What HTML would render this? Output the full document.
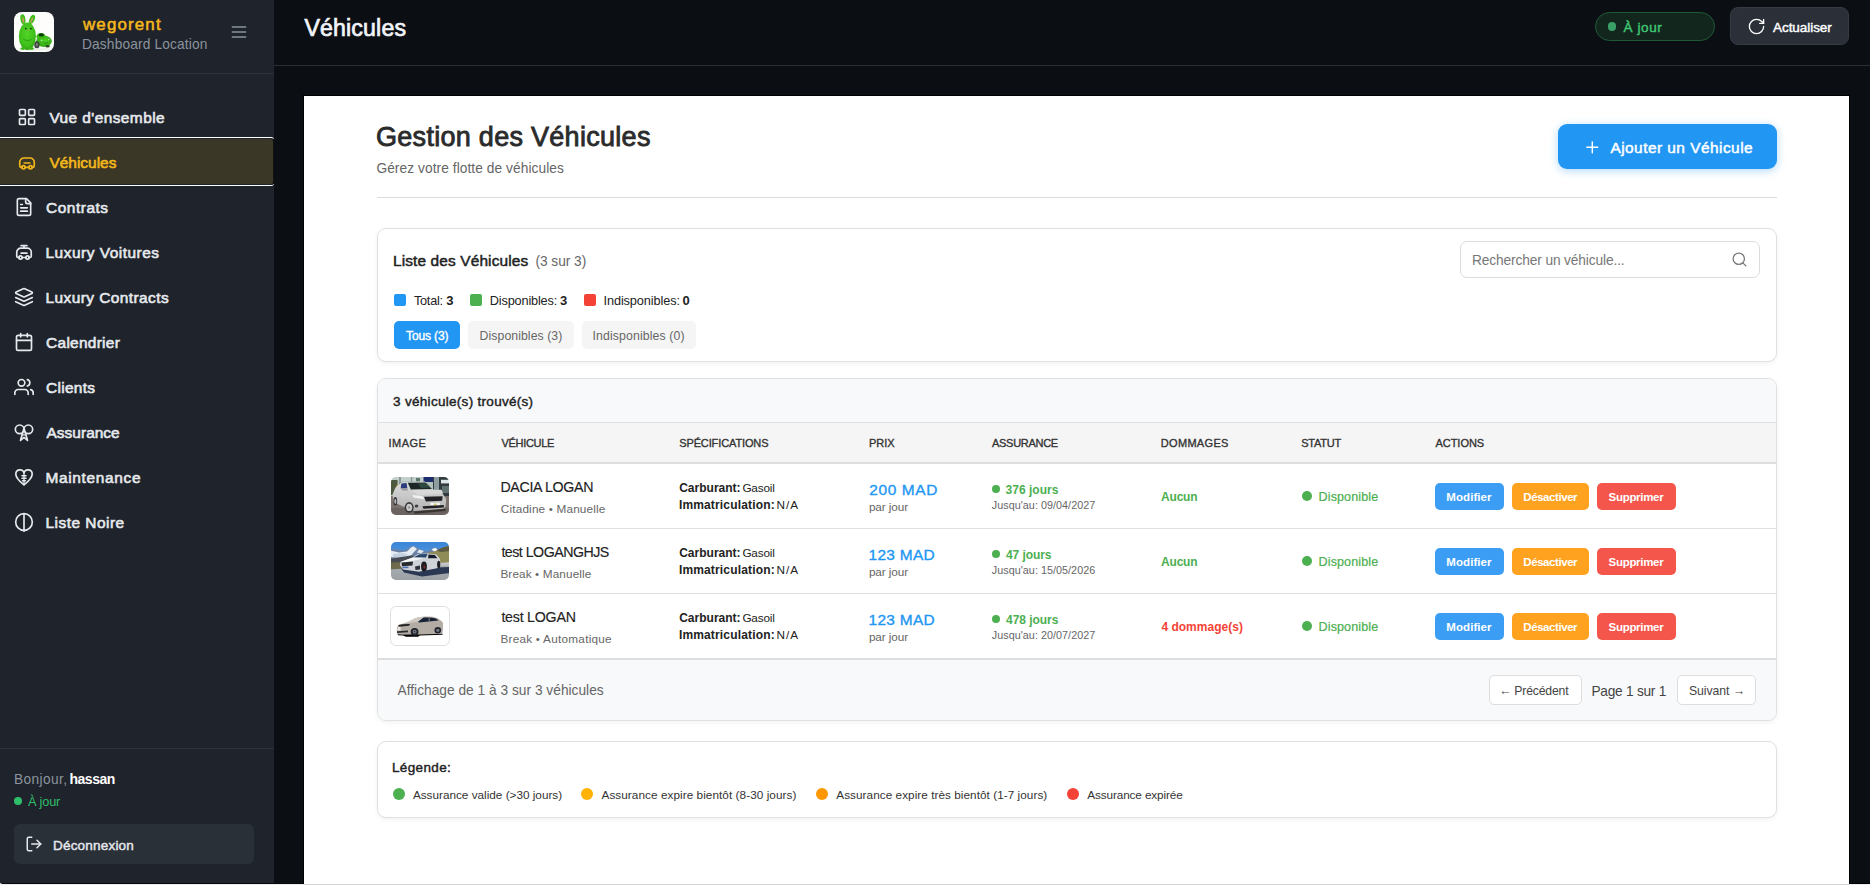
<!DOCTYPE html>
<html lang="fr">
<head>
<meta charset="utf-8">
<title>Véhicules</title>
<style>
*{box-sizing:border-box;margin:0;padding:0}
html,body{width:1870px;height:885px;overflow:hidden;background:#0b0e12;font-family:"Liberation Sans",sans-serif}
body{position:relative}
.b{position:absolute}
.t{position:absolute;white-space:nowrap;line-height:1}
svg{position:absolute;overflow:visible}
.ic{fill:none;stroke:#e6e9ed;stroke-width:2;stroke-linecap:round;stroke-linejoin:round}
.card{position:absolute;border:1px solid #e0e0e0;border-radius:9px;background:#fff;box-shadow:0 2px 5px rgba(0,0,0,.05)}
.btn{position:absolute;border-radius:5px;height:27px}
.dot{position:absolute;border-radius:50%}

</style>
</head>
<body>
<div class="b" style="left:0px;top:0px;width:274px;height:885px;background:#1f232b"></div>
<div class="b" style="left:0px;top:73px;width:274px;height:1px;background:#2d323b"></div>
<div class="b" style="left:0px;top:748px;width:274px;height:1px;background:#2d323b"></div>
<div class="b" style="left:-8px;top:137px;width:282px;height:49px;border-top:1px solid #fff;border-bottom:1px solid #fff;border-radius:3px"></div>
<div class="b" style="left:0px;top:139px;width:273px;height:45px;background:#3a3726;border-radius:0 3px 3px 0"></div>
<div class="b" style="left:273px;top:139px;width:1px;height:45px;background:#12130f"></div>
<div class="b" style="left:14px;top:824px;width:240px;height:40px;background:#2a3038;border-radius:6px"></div>
<div class="dot" style="left:14.0px;top:797.2px;width:8px;height:8px;background:#2fbf6a"></div>
<div class="b" style="left:274px;top:65px;width:1596px;height:1px;background:#2a2f38"></div>
<div class="b" style="left:1595px;top:12px;width:120px;height:29px;background:#13261e;border:1px solid #1f5a37;border-radius:15px"></div>
<div class="dot" style="left:1607.8px;top:22.2px;width:8.4px;height:8.4px;background:#3a9f66"></div>
<div class="b" style="left:1730px;top:7px;width:119px;height:38px;background:#2a2f38;border:1px solid #353b45;border-radius:8px"></div>
<div class="b" style="left:303px;top:95px;width:1547px;height:800px;background:#fff;border:1px solid #000"></div>
<div class="b" style="left:377px;top:197px;width:1400px;height:1px;background:#dcdcdc"></div>
<div class="b" style="left:1558px;top:124px;width:219px;height:45px;background:#2196f3;border-radius:9px;box-shadow:0 2px 8px rgba(33,150,243,.35)"></div>
<div class="card" style="left:377px;top:228px;width:1400px;height:134px"></div>
<div class="b" style="left:1460px;top:241px;width:300px;height:37px;border:1px solid #dcdcdc;border-radius:7px;background:#fff"></div>
<div class="b" style="left:394px;top:294px;width:12px;height:12px;background:#2196f3;border-radius:2px"></div>
<div class="b" style="left:470px;top:294px;width:12px;height:12px;background:#4caf50;border-radius:2px"></div>
<div class="b" style="left:584px;top:294px;width:12px;height:12px;background:#f44336;border-radius:2px"></div>
<div class="b" style="left:394px;top:321px;width:66px;height:28px;background:#2196f3;border-radius:5px"></div>
<div class="b" style="left:468px;top:321px;width:106px;height:28px;background:#f5f5f5;border-radius:5px"></div>
<div class="b" style="left:582px;top:321px;width:114px;height:28px;background:#f5f5f5;border-radius:5px"></div>
<div class="card" style="left:377px;top:378px;width:1400px;height:343px;overflow:hidden;background:#fff"><div class="b" style="left:0;top:0;width:1400px;height:44px;background:#f8f9fa;border-bottom:1px solid #e0e0e0"></div><div class="b" style="left:0;top:44px;width:1400px;height:41px;background:#f5f5f5;border-bottom:2px solid #dedede"></div><div class="b" style="left:0;top:149px;width:1400px;height:1px;background:#e0e0e0"></div><div class="b" style="left:0;top:214px;width:1400px;height:1px;background:#e0e0e0"></div><div class="b" style="left:0;top:279px;width:1400px;height:2px;background:#dedede"></div><div class="b" style="left:0;top:281px;width:1400px;height:62px;background:#f8f9fa"></div></div>
<div class="dot" style="left:992.0px;top:485.0px;width:8px;height:8px;background:#4caf50"></div>
<div class="dot" style="left:1302.0px;top:491.0px;width:10px;height:10px;background:#4caf50"></div>
<div class="b" style="left:1435px;top:483px;width:69px;height:27px;background:#3b9df4;border-radius:5px"></div>
<div class="b" style="left:1512px;top:483px;width:77px;height:27px;background:#ffa21f;border-radius:5px"></div>
<div class="b" style="left:1597px;top:483px;width:79px;height:27px;background:#f4564b;border-radius:5px"></div>
<div class="dot" style="left:992.0px;top:550.0px;width:8px;height:8px;background:#4caf50"></div>
<div class="dot" style="left:1302.0px;top:556.0px;width:10px;height:10px;background:#4caf50"></div>
<div class="b" style="left:1435px;top:548px;width:69px;height:27px;background:#3b9df4;border-radius:5px"></div>
<div class="b" style="left:1512px;top:548px;width:77px;height:27px;background:#ffa21f;border-radius:5px"></div>
<div class="b" style="left:1597px;top:548px;width:79px;height:27px;background:#f4564b;border-radius:5px"></div>
<div class="dot" style="left:992.0px;top:615.0px;width:8px;height:8px;background:#4caf50"></div>
<div class="dot" style="left:1302.0px;top:621.0px;width:10px;height:10px;background:#4caf50"></div>
<div class="b" style="left:1435px;top:613px;width:69px;height:27px;background:#3b9df4;border-radius:5px"></div>
<div class="b" style="left:1512px;top:613px;width:77px;height:27px;background:#ffa21f;border-radius:5px"></div>
<div class="b" style="left:1597px;top:613px;width:79px;height:27px;background:#f4564b;border-radius:5px"></div>
<div class="b" style="left:1489px;top:675px;width:93px;height:30px;background:#fff;border:1px solid #ddd;border-radius:5px"></div>
<div class="b" style="left:1677px;top:675px;width:79px;height:30px;background:#fff;border:1px solid #ddd;border-radius:5px"></div>
<div class="card" style="left:377px;top:741px;width:1400px;height:77px"></div>
<div class="dot" style="left:393.0px;top:788.0px;width:12px;height:12px;background:#4caf50"></div>
<div class="dot" style="left:581.0px;top:788.0px;width:12px;height:12px;background:#ffb300"></div>
<div class="dot" style="left:816.0px;top:788.0px;width:12px;height:12px;background:#ff9800"></div>
<div class="dot" style="left:1067.0px;top:788.0px;width:12px;height:12px;background:#f44336"></div>
<div class="b" style="left:0px;top:883px;width:303px;height:1px;background:#08090b"></div>
<div class="b" style="left:1850px;top:883px;width:20px;height:1px;background:#000"></div>
<div class="b" style="left:0px;top:884px;width:1870px;height:1px;background:#ededed"></div>
<div class="b" style="left:304px;top:884px;width:1545px;height:1px;background:#d4d4d4"></div>
<div class="b" style="left:0px;top:883px;width:2px;height:2px;background:#ededed;border-radius:0 2px 0 0"></div>
<svg class="ic" style="left:229px;top:22px;stroke:#8b949e;stroke-width:1.8" width="20" height="20" viewBox="0 0 24 24"><path d="M4 6h16M4 12h16M4 18h16"/></svg>
<svg class="ic" style="left:17px;top:107px;" width="20" height="20" viewBox="0 0 24 24"><rect x="3" y="3" width="7" height="7" rx="1"/><rect x="14" y="3" width="7" height="7" rx="1"/><rect x="14" y="14" width="7" height="7" rx="1"/><rect x="3" y="14" width="7" height="7" rx="1"/></svg>
<svg class="ic" style="left:17px;top:152.5px;stroke:#f5b81c;" width="20" height="20" viewBox="0 0 24 24"><path d="M6.200 17.200H4.800a1.500 1.500 0 0 1-1.500-1.500V11a5 5 0 0 1 5-5h7.400a5 5 0 0 1 5 5v4.700a1.500 1.500 0 0 1-1.500 1.500h-1.400"/><circle cx="7.800" cy="17.200" r="2"/><circle cx="16.200" cy="17.200" r="2"/><path d="M9.800 17.200h4.400M8.500 12h7"/></svg>
<svg class="ic" style="left:14px;top:197px;" width="20" height="20" viewBox="0 0 24 24"><path d="M15 2H6a2 2 0 0 0-2 2v16a2 2 0 0 0 2 2h12a2 2 0 0 0 2-2V7Z"/><path d="M14 2v4a2 2 0 0 0 2 2h4"/><path d="M10 9H8M16 13H8M16 17H8"/></svg>
<svg class="ic" style="left:14px;top:241.5px;" width="20" height="20" viewBox="0 0 24 24"><path d="M6.200 18.600H4.800a1.500 1.500 0 0 1-1.500-1.500V12.400a5 5 0 0 1 5-5h7.400a5 5 0 0 1 5 5v4.700a1.500 1.500 0 0 1-1.500 1.500h-1.400"/><circle cx="7.800" cy="18.600" r="2"/><circle cx="16.200" cy="18.600" r="2"/><path d="M9.800 18.600h4.400M8.500 13.400h7M8.500 4.400h7M12 4.400v3"/></svg>
<svg class="ic" style="left:14px;top:287px;" width="20" height="20" viewBox="0 0 24 24"><path d="m12.830 2.180a2 2 0 0 0-1.660 0L2.600 6.080a1 1 0 0 0 0 1.830l8.580 3.910a2 2 0 0 0 1.660 0l8.580-3.900a1 1 0 0 0 0-1.830Z"/><path d="m22 17.650-9.170 4.160a2 2 0 0 1-1.660 0L2 17.650"/><path d="m22 12.650-9.170 4.160a2 2 0 0 1-1.660 0L2 12.650"/></svg>
<svg class="ic" style="left:14px;top:332px;" width="20" height="20" viewBox="0 0 24 24"><path d="M8 2v4M16 2v4"/><rect x="3" y="4" width="18" height="18" rx="2"/><path d="M3 10h18"/></svg>
<svg class="ic" style="left:14px;top:377px;" width="20" height="20" viewBox="0 0 24 24"><path d="M17 21v-2a4 4 0 0 0-4-4H5a4 4 0 0 0-4 4v2"/><circle cx="9" cy="7" r="4"/><path d="M23 21v-2a4 4 0 0 0-3-3.870"/><path d="M16 3.130a4 4 0 0 1 0 7.750"/></svg>
<svg class="ic" style="left:14px;top:422px;" width="20" height="20" viewBox="0 0 24 24"><circle cx="6.800" cy="8.800" r="5.200"/><circle cx="17.200" cy="8.800" r="5.200"/><path d="M12 7.500 7.800 22l4.200-3.600 4.200 3.600Z"/><path d="M9.800 15.500h4.400" style="stroke-width:1.500"/></svg>
<svg class="ic" style="left:14px;top:467px;" width="20" height="20" viewBox="0 0 24 24"><path d="M12 21.500C6.500 17 2.200 13.200 2.200 8.600a5 5 0 0 1 9.800-1.600 5 5 0 0 1 9.800 1.600c0 4.600-4.300 8.400-9.800 12.900Z"/><path d="M12 7v14M9.500 10.500h5M9.500 13.500h5M10.200 16.500h3.600" style="stroke-width:1.600"/></svg>
<svg class="ic" style="left:14px;top:512px;" width="20" height="20" viewBox="0 0 24 24"><circle cx="12" cy="12" r="10"/><path d="M12 2.500v20.500"/></svg>
<svg class="ic" style="left:25px;top:835px;" width="18" height="18" viewBox="0 0 24 24"><path d="M9 21H5a2 2 0 0 1-2-2V5a2 2 0 0 1 2-2h4"/><path d="m16 17 5-5-5-5"/><path d="M21 12H9"/></svg>
<svg class="ic" style="left:1747.2px;top:16.5px;stroke:#fff;stroke-width:1.700" width="19" height="19" viewBox="0 0 24 24"><path d="M21 12a9 9 0 1 1-9-9c2.520 0 4.930 1 6.740 2.740L21 8"/><path d="M21 3v5h-5"/></svg>
<svg class="ic" style="left:1582.9px;top:138px;stroke:#fff;stroke-width:1.900" width="18.6" height="18.6" viewBox="0 0 24 24"><path d="M5 12h14M12 5v14"/></svg>
<svg class="ic" style="left:1731px;top:251px;stroke:#777;stroke-width:1.800" width="17" height="17" viewBox="0 0 24 24"><circle cx="11" cy="11" r="8"/><path d="m21 21-4.300-4.300"/></svg>
<svg style="left:14px;top:12px" width="40" height="40" viewBox="0 0 40 40">
<defs><clipPath id="lg"><rect width="40" height="40" rx="8"/></clipPath>
<radialGradient id="gb" cx="48%" cy="42%" r="62%"><stop offset="0" stop-color="#52d426"/><stop offset=".7" stop-color="#3fc01a"/><stop offset="1" stop-color="#2c9a10"/></radialGradient>
<radialGradient id="gc" cx="55%" cy="40%" r="65%"><stop offset="0" stop-color="#4fd024"/><stop offset="1" stop-color="#2fa512"/></radialGradient>
<filter id="fz" x="-10%" y="-10%" width="120%" height="120%"><feGaussianBlur stdDeviation=".35"/></filter></defs>
<g clip-path="url(#lg)"><rect width="40" height="40" fill="#fdfdfc"/>
<ellipse cx="20" cy="37" rx="16" ry="1.800" fill="#ecefe8"/>
<g filter="url(#fz)">
<ellipse cx="30" cy="29.200" rx="7.800" ry="5.700" fill="url(#gc)"/>
<ellipse cx="27" cy="24.500" rx="4.600" ry="3.600" fill="#3cbc18"/>
<ellipse cx="27.300" cy="22.900" rx="2.700" ry="1.700" fill="#0f3a08"/>
<ellipse cx="22.900" cy="32.700" rx="2.700" ry="3.500" fill="#39443a"/>
<ellipse cx="22.900" cy="32.700" rx="1.300" ry="1.900" fill="#6f7a70"/>
<ellipse cx="33.600" cy="34.300" rx="2.200" ry="1.200" fill="#2a4a1c"/>
<path d="M29.400 30.500q2.300 1.600 4.700-.2" stroke="#1f7a0c" stroke-width=".7" fill="none"/>
<circle cx="27.600" cy="28.200" r=".8" fill="#c9f2b8"/><circle cx="34.700" cy="27.600" r=".7" fill="#c9f2b8"/>
<ellipse cx="8.900" cy="7.200" rx="2.500" ry="5" transform="rotate(-9 8.900 7.200)" fill="#3fbe1a"/>
<ellipse cx="18" cy="7.400" rx="2.500" ry="4.900" transform="rotate(24 18 7.400)" fill="#3fbe1a"/>
<ellipse cx="9.100" cy="8" rx=".9" ry="3" transform="rotate(-9 9.100 8)" fill="#c69a5e"/>
<ellipse cx="17.700" cy="8.200" rx=".9" ry="2.900" transform="rotate(24 17.700 8.200)" fill="#c69a5e"/>
<ellipse cx="13.400" cy="24.200" rx="8.500" ry="13.700" fill="url(#gb)"/>
<ellipse cx="8.800" cy="36.600" rx="2.400" ry="1.300" fill="#3bb817"/><ellipse cx="17.600" cy="36.600" rx="2.400" ry="1.300" fill="#3bb817"/>
<path d="M9.500 27.500q4 2.600 8 0" stroke="#2a9010" stroke-width=".8" fill="none"/>
</g>
<circle cx="11.800" cy="16.600" r=".85" fill="#1c2a12"/><circle cx="16.900" cy="16.600" r=".85" fill="#1c2a12"/>
<ellipse cx="14.600" cy="18.300" rx=".7" ry=".5" fill="#d98c7a"/>
</g></svg>
<svg style="left:390px;top:476px" width="60" height="40" viewBox="-1 -1 60 40">
<defs><clipPath id="t1"><rect width="58" height="38" rx="5"/></clipPath>
<filter id="b1" x="-5%" y="-5%" width="110%" height="110%"><feGaussianBlur stdDeviation=".45"/></filter>
<linearGradient id="bd1" x1="0" y1="0" x2="0" y2="1"><stop offset="0" stop-color="#dcdcdc"/><stop offset="1" stop-color="#b3b3b3"/></linearGradient></defs>
<g clip-path="url(#t1)"><g filter="url(#b1)">
<rect x="-2" y="-2" width="62" height="42" fill="#b3c1bd"/>
<rect x="-2" y="-2" width="62" height="6" fill="#c3cfcc"/>
<rect x="-1" y="3" width="7.500" height="15" fill="#4e5a3c"/>
<rect x="5.500" y="8" width="3" height="3" fill="#d1a23a"/>
<rect x="8" y="0" width="2" height="9" fill="#8a9996"/>
<rect x="19.800" y="0" width="1.500" height="5" fill="#8a9996"/>
<rect x="25" y="1" width="4" height="3.500" fill="#5a7668"/>
<rect x="32.500" y="-1" width="9.500" height="6" fill="#1d2f6e"/>
<rect x="42" y="-1" width="17" height="28" fill="#333b3f"/>
<rect x="43" y="0" width="5" height="17" fill="#8e9ea0"/>
<rect x="50" y="2.800" width="9" height="3.600" fill="#dfe6ea"/>
<rect x="51" y="9" width="8" height="7" fill="#5f6f70"/>
<rect x="-1" y="19" width="60" height="21" fill="#7b726d"/>
<rect x="-1" y="31" width="60" height="9" fill="#6b635f"/>
<path d="M1.500 17.500 4.500 10.500 10.500 5.500 33.800 4.600 41.200 12 51.500 16.500 55.200 22 54.600 29.500 52 32 23 34 10 28.500 2.500 25Z" fill="url(#bd1)"/>
<path d="M16.800 5.700 34.500 5.400 41 11.900 19.800 12.600Z" fill="#1c2827"/>
<path d="M27 6.500 35 6 39 10.500 30 11Z" fill="#2f4a3f"/>
<path d="M10.300 6.400 15.600 5.900 16.300 11.300 9.700 11.600Z" fill="#2c3e78"/>
<path d="M10.500 11.500 16.500 11.500 17 13.500 11 13.500Z" fill="#9a9a9a"/>
<path d="M21 13 50.500 12.800 52.200 16.500 27 18Z" fill="#d8d8d8"/>
<path d="M21.500 18 31 19 34 22.500 22.500 20.500Z" fill="#f0f0f0"/>
<path d="M33 19.800 51.700 19.200 51.100 23.800 34.800 24.400Z" fill="#242426"/>
<path d="M31.400 29.300 52.800 28.100 52.800 30.600 32.500 31.700Z" fill="#232323"/>
<rect x="39.300" y="25.700" width="9.600" height="2.400" fill="#f6f6f2"/>
<rect x="43" y="26.600" width="2.500" height="1.300" fill="#d5c14a"/>
<ellipse cx="25.500" cy="29" rx="1.800" ry="1.600" fill="#3d3d3f"/>
<ellipse cx="18.200" cy="30.400" rx="4.500" ry="5.300" fill="#36363a"/><ellipse cx="18.200" cy="30.400" rx="3" ry="3.700" fill="#c9c9c9"/><ellipse cx="18.200" cy="30.400" rx="1" ry="1.200" fill="#8a8a8a"/>
<ellipse cx="4.300" cy="24.300" rx="1.900" ry="4.200" fill="#36363a"/><ellipse cx="4.300" cy="24.300" rx="1" ry="2.600" fill="#b5b5b5"/>
<path d="M22 34.500 54 31.800 55 34 24 36.800Z" fill="#3a3533"/>
</g></g></svg>
<svg style="left:390px;top:541px" width="60" height="40" viewBox="-1 -1 60 40">
<defs><clipPath id="t2"><rect width="58" height="38" rx="5"/></clipPath>
<filter id="b2" x="-5%" y="-5%" width="110%" height="110%"><feGaussianBlur stdDeviation=".5"/></filter>
<linearGradient id="sky" x1="0" y1="0" x2="0" y2="1"><stop offset="0" stop-color="#3583d6"/><stop offset="1" stop-color="#86b6e8"/></linearGradient>
<linearGradient id="rd" x1="0" y1="0" x2="0" y2="1"><stop offset="0" stop-color="#aab0b4"/><stop offset="1" stop-color="#9a9fa3"/></linearGradient></defs>
<g clip-path="url(#t2)"><g filter="url(#b2)">
<rect x="-2" y="-2" width="62" height="42" fill="url(#sky)"/>
<path d="M-1 6.500 6 7.500 13 8.500 19 5 22.500 3.800 27 6 31 8.500 36 9.500 41 6.500 44.500 5.500 49 8 59 7 59 21 -1 21Z" fill="#6b82a6"/>
<path d="M-1 8.500 8 10.500 16 9.500 20 5.500 22.500 4.200 26 7 23 10 20 13.500 12 16 -1 15Z" fill="#e4ecf4"/>
<path d="M2 12 12 11 18 13 10 15 2 15Z" fill="#c3d0df"/>
<path d="M28 7.500 33 9 30 11.500 26 10.500Z" fill="#dfe7f0"/>
<path d="M40.500 7.200 44.500 5.800 47.500 8.500 43 9.500Z" fill="#f4f7fa"/>
<path d="M35 11.500 47 8.500 52 5.500 59 3.500 59 22 35 22Z" fill="#8f8c58"/>
<path d="M45 8.500 52 5.500 59 3.800 59 9 50 10Z" fill="#5c5a40"/>
<path d="M-1 17 10 15 20 13.500 29 15.500 30 24 -1 25Z" fill="#464c52"/>
<rect x="-1" y="21.500" width="60" height="18" fill="url(#rd)"/>
<path d="M-1 20.500 13 20 13 26.500 -1 27.500Z" fill="#6f6a4e"/>
<path d="M49 21 59 20 59 23.500 49 23.500Z" fill="#c4c7ca"/>
<path d="M10 26.500 59 25 59 31 31 34.500 13 30.500Z" fill="#2b3853"/>
<path d="M8.800 23 9.500 20 21 15.800 27 12 37 11.400 45.500 12.600 49 17 49.500 24 46 26.200 28 29.800 12 27.500Z" fill="#d0d4d9"/>
<path d="M10 19.800 21 15.800 33 15.500 28 17.500 12 21Z" fill="#f3f5f7"/>
<path d="M23 15.200 28.500 12.200 36.500 11.900 35 15.400Z" fill="#27466a"/>
<path d="M37.500 12.400 43.800 13 46.500 16.200 37 16.200Z" fill="#181f2e"/>
<path d="M10.500 20.600 22 19.500 21.500 23.600 11 24.200Z" fill="#26292f"/>
<path d="M24 24.500 29 23.500 29 27.500 24.500 28Z" fill="#2d3038"/>
<rect x="11.500" y="24.600" width="6" height="1.600" fill="#4a6fb0"/>
<ellipse cx="33" cy="24.600" rx="2.900" ry="5" fill="#1b1b20"/><ellipse cx="33.300" cy="25" rx="1" ry="1.800" fill="#7a2a2a"/>
<ellipse cx="47.700" cy="22.400" rx="1.600" ry="3.700" fill="#1b1b20"/>
</g></g></svg>
<svg style="left:390px;top:606px" width="60" height="40" viewBox="0 0 60 40">
<defs><filter id="b3" x="-5%" y="-5%" width="110%" height="110%"><feGaussianBlur stdDeviation=".35"/></filter></defs>
<rect x=".5" y=".5" width="59" height="39" rx="5.500" fill="#fff" stroke="#e0e0e0"/>
<g filter="url(#b3)">
<path d="M7.500 28.200 52.500 27.600 52.500 28.800 30 29.600 28 30.800 16 30.800 13 29.500 8 29.300Z" fill="#050505"/>
<path d="M7 27.800 6.800 21.500 8.500 19 14 17.300 18 16.800 24 12.800 28.500 11.200 36 10.600 43 10.800 48 12.500 52 15.500 53 17 53 22.500 52.300 27.800 30 28.600 12 28.600Z" fill="#b3aca5"/>
<path d="M14 17.300 24 12.800 28.500 11.200 36 10.600 30 15.500 20 17Z" fill="#cfc9c2"/>
<path d="M28 15.800 33.500 11.600 40 11.400 46 12.400 48.500 14.500 29 16.600Z" fill="#182036"/>
<path d="M38.500 11.500 39.500 11.500 39.800 15.300 38.800 15.400Z" fill="#8d8780"/>
<path d="M8.300 19 13 18.200 20 18 19 19.800 9 20.800Z" fill="#202020"/>
<path d="M8 21 10.500 20.800 10.800 24.500 7.300 24.500Z" fill="#e9e6e0"/>
<path d="M7 25.200 18 24.400 18 26.300 7 27Z" fill="#2d2d2d"/>
<circle cx="24.600" cy="25.800" r="3.900" fill="#20232a"/><circle cx="24.600" cy="25.800" r="2" fill="#767a84"/><circle cx="24.600" cy="25.800" r=".7" fill="#20232a"/>
<circle cx="47.800" cy="24.300" r="3.300" fill="#20232a"/><circle cx="47.800" cy="24.300" r="1.600" fill="#767a84"/>
</g></svg>
<span class="t" style="left:83.0px;top:15px;line-height:19px;font-size:16.89px;color:#f5b81c;-webkit-text-stroke:0.52px currentColor;letter-spacing:1.168px;">wegorent</span>
<span class="t" style="left:82.0px;top:37px;line-height:15px;font-size:13.72px;color:#8b949e;letter-spacing:0.153px;">Dashboard Location</span>
<span class="t" style="left:49.4px;top:109px;line-height:17px;font-size:15.44px;color:#e6e9ed;-webkit-text-stroke:0.6px currentColor;letter-spacing:0.427px;">Vue d&#x27;ensemble</span>
<span class="t" style="left:49.4px;top:154px;line-height:17px;font-size:15.44px;color:#f5b81c;-webkit-text-stroke:0.6px currentColor;letter-spacing:0.008px;">Véhicules</span>
<span class="t" style="left:46.1px;top:199px;line-height:17px;font-size:15.44px;color:#e6e9ed;-webkit-text-stroke:0.6px currentColor;letter-spacing:0.511px;">Contrats</span>
<span class="t" style="left:45.5px;top:244px;line-height:17px;font-size:15.44px;color:#e6e9ed;-webkit-text-stroke:0.6px currentColor;letter-spacing:0.511px;">Luxury Voitures</span>
<span class="t" style="left:45.5px;top:289px;line-height:17px;font-size:15.44px;color:#e6e9ed;-webkit-text-stroke:0.6px currentColor;letter-spacing:0.433px;">Luxury Contracts</span>
<span class="t" style="left:46.1px;top:334px;line-height:17px;font-size:15.44px;color:#e6e9ed;-webkit-text-stroke:0.6px currentColor;letter-spacing:0.281px;">Calendrier</span>
<span class="t" style="left:46.1px;top:379px;line-height:17px;font-size:15.44px;color:#e6e9ed;-webkit-text-stroke:0.6px currentColor;letter-spacing:0.296px;">Clients</span>
<span class="t" style="left:46.5px;top:424px;line-height:17px;font-size:15.44px;color:#e6e9ed;-webkit-text-stroke:0.6px currentColor;letter-spacing:0.033px;">Assurance</span>
<span class="t" style="left:45.5px;top:469px;line-height:17px;font-size:15.44px;color:#e6e9ed;-webkit-text-stroke:0.6px currentColor;letter-spacing:0.660px;">Maintenance</span>
<span class="t" style="left:45.5px;top:514px;line-height:17px;font-size:15.44px;color:#e6e9ed;-webkit-text-stroke:0.6px currentColor;letter-spacing:0.486px;">Liste Noire</span>
<span class="t" style="left:14.0px;top:772px;line-height:15px;font-size:13.72px;color:#8b949e;letter-spacing:0.371px;">Bonjour,</span>
<span class="t" style="left:69.4px;top:771px;line-height:16px;font-size:14.0px;color:#ffffff;font-weight:bold;letter-spacing:-0.454px;">hassan</span>
<span class="t" style="left:27.9px;top:794px;line-height:15px;font-size:12.74px;color:#2fbf6a;letter-spacing:-0.175px;">À jour</span>
<span class="t" style="left:53.0px;top:838px;line-height:15px;font-size:13.51px;color:#e6e9ed;-webkit-text-stroke:0.42px currentColor;letter-spacing:0.204px;">Déconnexion</span>
<span class="t" style="left:304.4px;top:15px;line-height:26px;font-size:23.16px;color:#f0f4f8;-webkit-text-stroke:0.72px currentColor;letter-spacing:0.150px;">Véhicules</span>
<span class="t" style="left:1623.6px;top:20px;line-height:15px;font-size:13.51px;color:#3fc873;-webkit-text-stroke:0.42px currentColor;letter-spacing:0.579px;">À jour</span>
<span class="t" style="left:1773.0px;top:20px;line-height:15px;font-size:13.51px;color:#ffffff;-webkit-text-stroke:0.42px currentColor;letter-spacing:-0.056px;">Actualiser</span>
<span class="t" style="left:376.0px;top:122px;line-height:30px;font-size:27.02px;color:#2b2b2b;-webkit-text-stroke:0.84px currentColor;letter-spacing:0.279px;">Gestion des Véhicules</span>
<span class="t" style="left:376.4px;top:161px;line-height:15px;font-size:13.72px;color:#666;letter-spacing:0.074px;">Gérez votre flotte de véhicules</span>
<span class="t" style="left:1610.4px;top:139px;line-height:17px;font-size:15.44px;color:#ffffff;-webkit-text-stroke:0.48px currentColor;letter-spacing:0.463px;">Ajouter un Véhicule</span>
<span class="t" style="left:393.0px;top:252px;line-height:17px;font-size:15.44px;color:#222;-webkit-text-stroke:0.48px currentColor;letter-spacing:0.119px;">Liste des Véhicules</span>
<span class="t" style="left:535.4px;top:254px;line-height:15px;font-size:13.72px;color:#666;letter-spacing:-0.023px;">(3 sur 3)</span>
<span class="t" style="left:1472.0px;top:253px;line-height:15px;font-size:13.72px;color:#777;letter-spacing:-0.122px;">Rechercher un véhicule...</span>
<span class="t" style="left:413.9px;top:293px;line-height:15px;font-size:12.74px;color:#222;letter-spacing:-0.248px;">Total:</span>
<span class="t" style="left:446.2px;top:293px;line-height:15px;font-size:13.0px;color:#222;font-weight:bold;">3</span>
<span class="t" style="left:489.8px;top:293px;line-height:15px;font-size:12.74px;color:#222;letter-spacing:-0.176px;">Disponibles:</span>
<span class="t" style="left:560.0px;top:293px;line-height:15px;font-size:13.0px;color:#222;font-weight:bold;">3</span>
<span class="t" style="left:603.5px;top:293px;line-height:15px;font-size:12.74px;color:#222;letter-spacing:-0.109px;">Indisponibles:</span>
<span class="t" style="left:682.6px;top:293px;line-height:15px;font-size:13.0px;color:#222;font-weight:bold;">0</span>
<span class="t" style="left:406.0px;top:329px;line-height:14px;font-size:12.06px;color:#fff;-webkit-text-stroke:0.37px currentColor;letter-spacing:-0.143px;">Tous (3)</span>
<span class="t" style="left:479.6px;top:329px;line-height:14px;font-size:12.25px;color:#666;letter-spacing:0.074px;">Disponibles (3)</span>
<span class="t" style="left:592.6px;top:329px;line-height:14px;font-size:12.25px;color:#666;letter-spacing:0.127px;">Indisponibles (0)</span>
<span class="t" style="left:393.1px;top:394px;line-height:15px;font-size:13.51px;color:#222;-webkit-text-stroke:0.42px currentColor;letter-spacing:0.294px;">3 véhicule(s) trouvé(s)</span>
<span class="t" style="left:388.6px;top:437px;line-height:12px;font-size:11.0px;color:#333;-webkit-text-stroke:0.34px currentColor;letter-spacing:0.427px;">IMAGE</span>
<span class="t" style="left:501.4px;top:437px;line-height:12px;font-size:11.0px;color:#333;-webkit-text-stroke:0.34px currentColor;letter-spacing:-0.286px;">VÉHICULE</span>
<span class="t" style="left:679.2px;top:437px;line-height:12px;font-size:11.0px;color:#333;-webkit-text-stroke:0.34px currentColor;letter-spacing:-0.118px;">SPÉCIFICATIONS</span>
<span class="t" style="left:869.0px;top:437px;line-height:12px;font-size:11.0px;color:#333;-webkit-text-stroke:0.34px currentColor;letter-spacing:-0.032px;">PRIX</span>
<span class="t" style="left:992.0px;top:437px;line-height:12px;font-size:11.0px;color:#333;-webkit-text-stroke:0.34px currentColor;letter-spacing:-0.286px;">ASSURANCE</span>
<span class="t" style="left:1160.8px;top:437px;line-height:12px;font-size:11.0px;color:#333;-webkit-text-stroke:0.34px currentColor;letter-spacing:0.312px;">DOMMAGES</span>
<span class="t" style="left:1301.2px;top:437px;line-height:12px;font-size:11.0px;color:#333;-webkit-text-stroke:0.34px currentColor;letter-spacing:-0.207px;">STATUT</span>
<span class="t" style="left:1435.4px;top:437px;line-height:12px;font-size:11.0px;color:#333;-webkit-text-stroke:0.34px currentColor;letter-spacing:-0.016px;">ACTIONS</span>
<span class="t" style="left:500.4px;top:479px;line-height:16px;font-size:14.21px;color:#222;letter-spacing:-0.321px;-webkit-text-stroke:0.15px currentColor;">DACIA LOGAN</span>
<span class="t" style="left:500.8px;top:502px;line-height:13px;font-size:11.76px;color:#666;letter-spacing:0.175px;">Citadine • Manuelle</span>
<span class="t" style="left:679.2px;top:481px;line-height:14px;font-size:12.0px;color:#222;font-weight:bold;letter-spacing:0.009px;">Carburant:</span>
<span class="t" style="left:742.4px;top:481px;line-height:13px;font-size:11.76px;color:#222;letter-spacing:-0.169px;">Gasoil</span>
<span class="t" style="left:678.9px;top:498px;line-height:14px;font-size:12.0px;color:#222;font-weight:bold;letter-spacing:0.159px;">Immatriculation:</span>
<span class="t" style="left:776.6px;top:498px;line-height:13px;font-size:11.76px;color:#222;letter-spacing:0.912px;">N/A</span>
<span class="t" style="left:869.2px;top:481px;line-height:17px;font-size:15.44px;color:#2196f3;-webkit-text-stroke:0.35px currentColor;letter-spacing:0.641px;">200 MAD</span>
<span class="t" style="left:868.9px;top:500px;line-height:13px;font-size:11.76px;color:#666;letter-spacing:-0.094px;">par jour</span>
<span class="t" style="left:1005.5px;top:483px;line-height:14px;font-size:12.0px;color:#4caf50;font-weight:bold;letter-spacing:0.025px;">376 jours</span>
<span class="t" style="left:991.8px;top:499px;line-height:12px;font-size:10.78px;color:#666;letter-spacing:0.042px;">Jusqu&#x27;au: 09/04/2027</span>
<span class="t" style="left:1161.1px;top:490px;line-height:14px;font-size:12.0px;color:#4caf50;font-weight:bold;letter-spacing:-0.229px;">Aucun</span>
<span class="t" style="left:1318.6px;top:490px;line-height:14px;font-size:12.54px;color:#4caf50;-webkit-text-stroke:0.2px currentColor;letter-spacing:0.111px;">Disponible</span>
<span class="t" style="left:1446.3px;top:491px;line-height:12px;font-size:11.5px;color:#fff;font-weight:bold;letter-spacing:0.071px;">Modifier</span>
<span class="t" style="left:1523.3px;top:491px;line-height:12px;font-size:11.5px;color:#fff;font-weight:bold;letter-spacing:-0.434px;">Désactiver</span>
<span class="t" style="left:1608.6px;top:491px;line-height:12px;font-size:11.5px;color:#fff;font-weight:bold;letter-spacing:-0.309px;">Supprimer</span>
<span class="t" style="left:501.4px;top:544px;line-height:16px;font-size:14.21px;color:#222;letter-spacing:-0.506px;-webkit-text-stroke:0.15px currentColor;">test LOGANGHJS</span>
<span class="t" style="left:500.4px;top:567px;line-height:13px;font-size:11.76px;color:#666;letter-spacing:0.127px;">Break • Manuelle</span>
<span class="t" style="left:679.2px;top:546px;line-height:14px;font-size:12.0px;color:#222;font-weight:bold;letter-spacing:0.009px;">Carburant:</span>
<span class="t" style="left:742.4px;top:546px;line-height:13px;font-size:11.76px;color:#222;letter-spacing:-0.169px;">Gasoil</span>
<span class="t" style="left:678.9px;top:563px;line-height:14px;font-size:12.0px;color:#222;font-weight:bold;letter-spacing:0.159px;">Immatriculation:</span>
<span class="t" style="left:776.6px;top:563px;line-height:13px;font-size:11.76px;color:#222;letter-spacing:0.912px;">N/A</span>
<span class="t" style="left:868.6px;top:546px;line-height:17px;font-size:15.44px;color:#2196f3;-webkit-text-stroke:0.35px currentColor;letter-spacing:0.300px;">123 MAD</span>
<span class="t" style="left:868.9px;top:565px;line-height:13px;font-size:11.76px;color:#666;letter-spacing:-0.094px;">par jour</span>
<span class="t" style="left:1006.0px;top:548px;line-height:14px;font-size:12.0px;color:#4caf50;font-weight:bold;letter-spacing:-0.076px;">47 jours</span>
<span class="t" style="left:991.8px;top:564px;line-height:12px;font-size:10.78px;color:#666;letter-spacing:0.041px;">Jusqu&#x27;au: 15/05/2026</span>
<span class="t" style="left:1161.1px;top:555px;line-height:14px;font-size:12.0px;color:#4caf50;font-weight:bold;letter-spacing:-0.229px;">Aucun</span>
<span class="t" style="left:1318.6px;top:555px;line-height:14px;font-size:12.54px;color:#4caf50;-webkit-text-stroke:0.2px currentColor;letter-spacing:0.111px;">Disponible</span>
<span class="t" style="left:1446.3px;top:556px;line-height:12px;font-size:11.5px;color:#fff;font-weight:bold;letter-spacing:0.071px;">Modifier</span>
<span class="t" style="left:1523.3px;top:556px;line-height:12px;font-size:11.5px;color:#fff;font-weight:bold;letter-spacing:-0.434px;">Désactiver</span>
<span class="t" style="left:1608.6px;top:556px;line-height:12px;font-size:11.5px;color:#fff;font-weight:bold;letter-spacing:-0.309px;">Supprimer</span>
<span class="t" style="left:501.4px;top:609px;line-height:16px;font-size:14.21px;color:#222;letter-spacing:-0.226px;-webkit-text-stroke:0.15px currentColor;">test LOGAN</span>
<span class="t" style="left:500.4px;top:632px;line-height:13px;font-size:11.76px;color:#666;letter-spacing:0.254px;">Break • Automatique</span>
<span class="t" style="left:679.2px;top:611px;line-height:14px;font-size:12.0px;color:#222;font-weight:bold;letter-spacing:0.009px;">Carburant:</span>
<span class="t" style="left:742.4px;top:611px;line-height:13px;font-size:11.76px;color:#222;letter-spacing:-0.169px;">Gasoil</span>
<span class="t" style="left:678.9px;top:628px;line-height:14px;font-size:12.0px;color:#222;font-weight:bold;letter-spacing:0.159px;">Immatriculation:</span>
<span class="t" style="left:776.6px;top:628px;line-height:13px;font-size:11.76px;color:#222;letter-spacing:0.912px;">N/A</span>
<span class="t" style="left:868.6px;top:611px;line-height:17px;font-size:15.44px;color:#2196f3;-webkit-text-stroke:0.35px currentColor;letter-spacing:0.300px;">123 MAD</span>
<span class="t" style="left:868.9px;top:630px;line-height:13px;font-size:11.76px;color:#666;letter-spacing:-0.094px;">par jour</span>
<span class="t" style="left:1006.0px;top:613px;line-height:14px;font-size:12.0px;color:#4caf50;font-weight:bold;letter-spacing:-0.034px;">478 jours</span>
<span class="t" style="left:991.8px;top:629px;line-height:12px;font-size:10.78px;color:#666;letter-spacing:0.042px;">Jusqu&#x27;au: 20/07/2027</span>
<span class="t" style="left:1161.4px;top:620px;line-height:14px;font-size:12.0px;color:#f44336;font-weight:bold;letter-spacing:0.013px;">4 dommage(s)</span>
<span class="t" style="left:1318.6px;top:620px;line-height:14px;font-size:12.54px;color:#4caf50;-webkit-text-stroke:0.2px currentColor;letter-spacing:0.111px;">Disponible</span>
<span class="t" style="left:1446.3px;top:621px;line-height:12px;font-size:11.5px;color:#fff;font-weight:bold;letter-spacing:0.071px;">Modifier</span>
<span class="t" style="left:1523.3px;top:621px;line-height:12px;font-size:11.5px;color:#fff;font-weight:bold;letter-spacing:-0.434px;">Désactiver</span>
<span class="t" style="left:1608.6px;top:621px;line-height:12px;font-size:11.5px;color:#fff;font-weight:bold;letter-spacing:-0.309px;">Supprimer</span>
<span class="t" style="left:397.5px;top:683px;line-height:15px;font-size:13.72px;color:#666;letter-spacing:0.016px;">Affichage de 1 à 3 sur 3 véhicules</span>
<span class="t" style="left:1499.0px;top:684px;line-height:14px;font-size:12.25px;color:#444;letter-spacing:-0.185px;">← Précédent</span>
<span class="t" style="left:1591.4px;top:684px;line-height:15px;font-size:13.72px;color:#444;letter-spacing:-0.256px;">Page 1 sur 1</span>
<span class="t" style="left:1689.0px;top:684px;line-height:14px;font-size:12.25px;color:#444;letter-spacing:-0.074px;">Suivant →</span>
<span class="t" style="left:392.0px;top:760px;line-height:15px;font-size:13.51px;color:#222;-webkit-text-stroke:0.42px currentColor;letter-spacing:0.359px;">Légende:</span>
<span class="t" style="left:412.9px;top:788px;line-height:13px;font-size:11.76px;color:#333;">Assurance valide (&gt;30 jours)</span>
<span class="t" style="left:601.5px;top:788px;line-height:13px;font-size:11.76px;color:#333;letter-spacing:0.060px;">Assurance expire bientôt (8-30 jours)</span>
<span class="t" style="left:836.3px;top:788px;line-height:13px;font-size:11.76px;color:#333;letter-spacing:0.049px;">Assurance expire très bientôt (1-7 jours)</span>
<span class="t" style="left:1087.3px;top:788px;line-height:13px;font-size:11.76px;color:#333;letter-spacing:-0.116px;">Assurance expirée</span>
</body>
</html>
